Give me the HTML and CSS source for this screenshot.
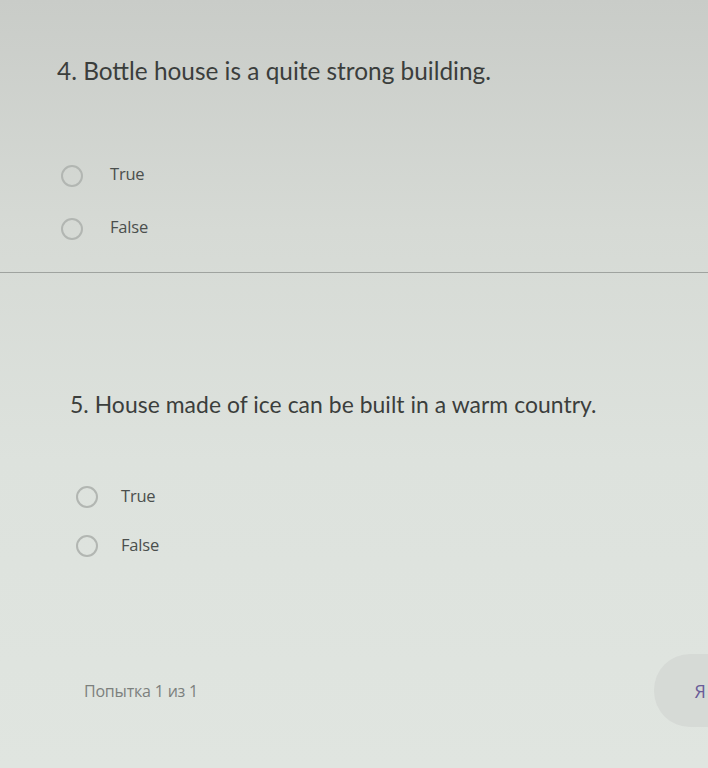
FILE: index.html
```html
<!DOCTYPE html>
<html lang="en">
<head>
<meta charset="utf-8">
<title>Quiz</title>
<link rel="stylesheet" href="styles.css">
</head>
<body>
<div class="page">
  <section class="question q4">
    <h2 class="q-title">4. Bottle house is a quite strong building.</h2>
    <div class="options">
      <label class="option"><span class="radio"></span><span class="opt-text">True</span></label>
      <label class="option"><span class="radio"></span><span class="opt-text">False</span></label>
    </div>
  </section>
  <section class="question q5">
    <h2 class="q-title">5. House made of ice can be built in a warm country.</h2>
    <div class="options">
      <label class="option"><span class="radio"></span><span class="opt-text">True</span></label>
      <label class="option"><span class="radio"></span><span class="opt-text">False</span></label>
    </div>
    <div class="footer">
      <span class="attempt">Попытка 1 из 1</span>
      <span class="pill">Я</span>
    </div>
  </section>
</div>
</body>
</html>
```

FILE: styles.css
```css
html, body {
  margin: 0;
  padding: 0;
}
body {
  width: 708px;
  height: 768px;
  overflow: hidden;
  background: linear-gradient(180deg, #c9ccc8 0%, #d6dad5 30%, #dde2dd 60%, #e0e5e0 100%);
  font-family: Lato, "Open Sans", "DejaVu Sans", sans-serif;
}
.page {
  display: flex;
  flex-direction: column;
}
.question {
  box-sizing: border-box;
}
.q4 {
  height: 273px;
  padding: 57px 0 0 57px;
  border-bottom: 1px solid #9fa39f;
}
.q5 {
  padding: 117px 0 0 70px;
}
.q-title {
  margin: 0;
  font-weight: 400;
  color: #3b3e3c;
  line-height: 28px;
}
.q4 .q-title {
  font-size: 24.4px;
  letter-spacing: 0;
}
.q5 .q-title {
  font-size: 22.9px;
  letter-spacing: 0.05px;
}
.options {
  display: flex;
  flex-direction: column;
}
.q4 .options {
  margin-top: 80px;
  padding-left: 4px;
  gap: 31px;
}
.q5 .options {
  margin-top: 68px;
  padding-left: 6px;
  gap: 27px;
}
.option {
  display: flex;
  align-items: center;
  height: 22px;
}
.radio {
  box-sizing: border-box;
  width: 22px;
  height: 22px;
  border: 2px solid #b2b6b2;
  border-radius: 50%;
  flex: none;
}
.opt-text {
  font-family: "Open Sans", "DejaVu Sans", sans-serif;
  font-size: 16.5px;
  color: #4b4f4d;
  letter-spacing: -0.2px;
}
.q4 .opt-text {
  margin-left: 27px;
  margin-top: -6px;
}
.q5 .opt-text {
  margin-left: 23px;
  margin-top: -3px;
}
.footer {
  display: flex;
  align-items: center;
  justify-content: space-between;
  margin-top: 97px;
}
.attempt {
  margin-left: 14px;
  font-family: "Open Sans", "DejaVu Sans", sans-serif;
  font-size: 16px;
  color: #7c807d;
  letter-spacing: -0.2px;
}
.pill {
  display: flex;
  align-items: center;
  justify-content: flex-end;
  box-sizing: border-box;
  width: 54px;
  height: 73px;
  padding-right: 2px;
  border-radius: 36px 0 0 36px;
  background: #d6dad6;
  font-family: "Open Sans", "DejaVu Sans", sans-serif;
  font-size: 18px;
  color: #6a5c98;
}
```
